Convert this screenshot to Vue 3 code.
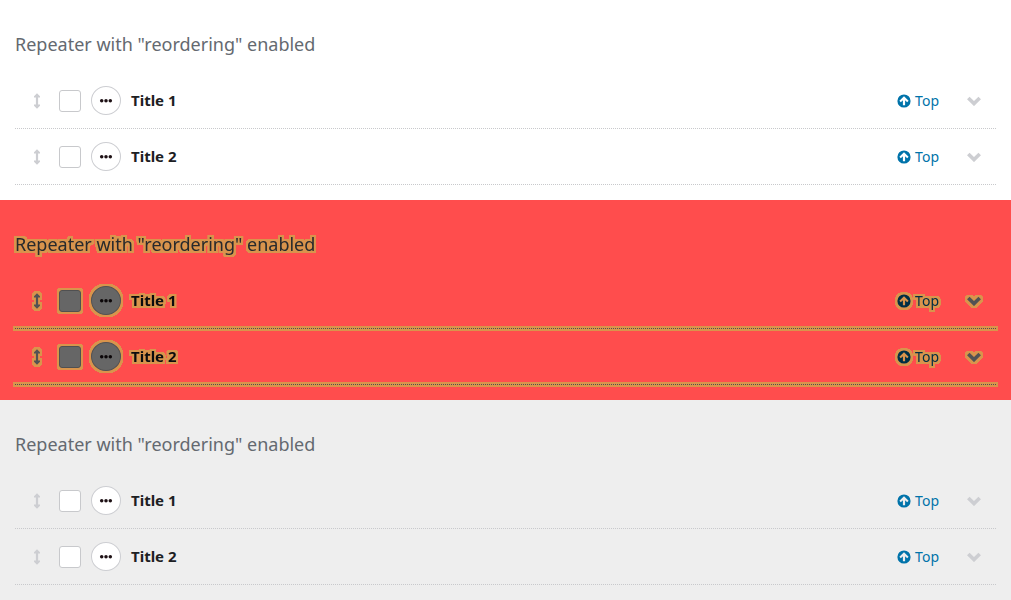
<script setup>
const panels = ['plain', 'marked', 'shaded']
const items = ['Title 1', 'Title 2']
</script>

<template>
  <main class="page">
    <svg class="defs" width="0" height="0" aria-hidden="true">
      <filter id="halo" x="-5%" y="-10%" width="110%" height="120%" color-interpolation-filters="sRGB">
        <feMorphology in="SourceAlpha" operator="dilate" radius="2" result="grown" />
        <feComponentTransfer in="grown" result="hard">
          <feFuncA type="linear" slope="6" intercept="-0.6" />
        </feComponentTransfer>
        <feFlood flood-color="#d9944c" />
        <feComposite in2="hard" operator="in" result="outline" />
        <feComponentTransfer in="SourceGraphic" result="dark">
          <feFuncR type="linear" slope="0.4" />
          <feFuncG type="linear" slope="0.4" />
          <feFuncB type="linear" slope="0.4" />
        </feComponentTransfer>
        <feMerge>
          <feMergeNode in="outline" />
          <feMergeNode in="dark" />
        </feMerge>
      </filter>
    </svg>

    <section v-for="panel in panels" :key="panel" class="panel" :class="panel">
      <div class="repeater">
        <h2>Repeater with "reordering" enabled</h2>
        <ul>
          <li v-for="title in items" :key="title">
            <button class="drag" type="button" aria-label="Drag to reorder">
              <svg width="8" height="16" viewBox="0 0 8 16">
                <path d="M4 0.2 7 3.2V4.6H5.1v6.8H7v1.4L4 15.8 1 12.8V11.4h1.9V4.6H1V3.2Z" />
              </svg>
            </button>
            <input type="checkbox" :aria-label="'Select ' + title" />
            <button class="more" type="button" aria-label="More actions">
              <svg width="14" height="4" viewBox="0 0 14 4">
                <circle cx="2.7" cy="1.8" r="1.75" />
                <circle cx="7" cy="1.8" r="1.75" />
                <circle cx="11.3" cy="1.8" r="1.75" />
              </svg>
            </button>
            <span class="title">{{ title }}</span>
            <a class="top" href="#top">
              <svg width="14" height="14" viewBox="0 0 14 14" aria-hidden="true">
                <path
                  fill-rule="evenodd"
                  d="M7 0.4a6.6 6.6 0 1 0 0 13.2a6.6 6.6 0 1 0 0-13.2ZM7 2.2 11.6 6.8 10.2 8.2 8.1 6.2V11.2H5.9V6.2L3.8 8.2 2.4 6.8Z"
                />
              </svg>
              Top
            </a>
            <button class="toggle" type="button" aria-label="Expand">
              <svg width="16" height="10" viewBox="0 0 16 10">
                <path d="M2.3 2 8 7.6 13.7 2" />
              </svg>
            </button>
          </li>
        </ul>
      </div>
    </section>
  </main>
</template>

<style>
body {
  margin: 0;
  background: #fff;
}
</style>

<style scoped>
.page {
  font-family: "Noto Sans", "Open Sans", sans-serif;
  color: #1d2023;
}
.defs {
  position: absolute;
}
.panel {
  padding: 30px 15px 15px;
}
.marked {
  background: #ff4d4d;
}
.marked .repeater {
  filter: url(#halo);
}
.shaded {
  background: #eee;
}
h2 {
  margin: 0 0 15px;
  font-size: 18px;
  line-height: 28px;
  font-weight: 400;
  color: #646970;
}
ul {
  margin: 0;
  padding: 0;
  list-style: none;
}
li {
  display: flex;
  align-items: center;
  box-sizing: border-box;
  height: 56px;
  padding: 0 14px 0 18px;
  border-bottom: 1px dotted #c8c9cc;
}
button {
  display: flex;
  align-items: center;
  justify-content: center;
  padding: 0;
  border: 0;
  background: none;
}
svg {
  display: block;
}
.drag {
  width: 8px;
  height: 16px;
  margin-right: 18px;
}
.drag svg {
  fill: #cdced2;
}
input {
  appearance: none;
  box-sizing: border-box;
  width: 22px;
  height: 22px;
  margin: 0 10px 0 0;
  border: 1px solid #c8c9cc;
  border-radius: 3px;
  background: #fff;
}
.more {
  box-sizing: border-box;
  width: 30px;
  height: 29px;
  margin-right: 10px;
  border: 1px solid #cdced2;
  border-radius: 50%;
  background: #fff;
}
.more svg {
  fill: #1d1014;
}
.title {
  flex: 1;
  padding-bottom: 2px;
  font-size: 15px;
  line-height: 22px;
  font-weight: 700;
}
.top {
  display: flex;
  align-items: center;
  gap: 4px;
  margin-right: 27px;
  font-size: 14px;
  line-height: 22px;
  color: #0073aa;
  text-decoration: none;
}
.top svg {
  fill: currentColor;
}
.toggle {
  width: 16px;
  height: 16px;
}
.toggle path {
  fill: none;
  stroke: #cdced2;
  stroke-width: 3.6;
}
</style>
